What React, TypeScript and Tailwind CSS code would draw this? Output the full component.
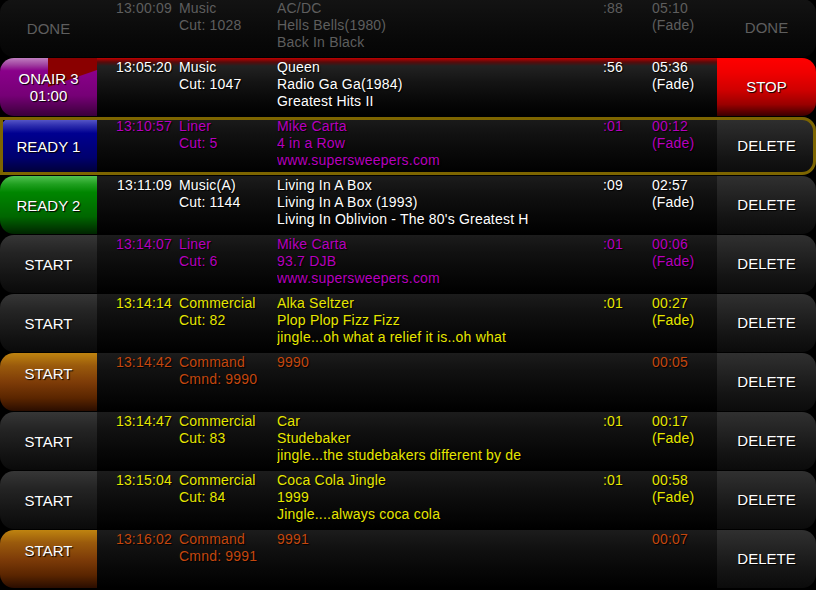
import React from 'react';

type Tone = 'done' | 'music' | 'liner' | 'spot' | 'command';
type Lamp = 'done' | 'onair' | 'ready1' | 'ready2' | 'start' | 'cmd';

interface Event {
  lamp: Lamp;
  label: string[];
  time: string;
  kind: string[];
  info: string[];
  segue: string;
  length: string[];
  tone: Tone;
  action: 'DONE' | 'STOP' | 'DELETE';
  selected?: boolean;
}

const toneText: Record<Tone, string> = {
  done: 'text-[#5e5e5e]',
  music: 'text-white',
  liner: 'text-[#b600bd]',
  spot: 'text-[#e6e600]',
  command: 'text-[#c4470e]',
};

const lampBg: Record<Lamp, string> = {
  done: 'bg-gradient-to-b from-[#131313] to-[#050505]',
  onair: 'bg-[linear-gradient(to_bottom,#c07ec0_0%,#a040a0_12%,#8a008a_22%,#760076_65%,#3a003a_100%)]',
  ready1: 'bg-[linear-gradient(to_bottom,#6a6ad2_0%,#3030b0_14%,#000090_28%,#00006e_70%,#00002e_100%)]',
  ready2: 'bg-[linear-gradient(to_bottom,#52c252_0%,#20a020_14%,#008600_28%,#006600_70%,#002400_100%)]',
  start: 'bg-[linear-gradient(to_bottom,#363636_0%,#242424_30%,#141414_70%,#0a0a0a_100%)]',
  cmd: 'bg-[linear-gradient(to_bottom,#bf8410_0%,#9a5a0c_22%,#7e3c08_50%,#5a2500_78%,#2a0d00_100%)]',
};

const events: Event[] = [
  { lamp: 'done', label: ['DONE'], time: '13:00:09', kind: ['Music', 'Cut: 1028'], info: ['AC/DC', 'Hells Bells(1980)', 'Back In Black'], segue: ':88', length: ['05:10', '(Fade)'], tone: 'done', action: 'DONE' },
  { lamp: 'onair', label: ['ONAIR 3', '01:00'], time: '13:05:20', kind: ['Music', 'Cut: 1047'], info: ['Queen', 'Radio Ga Ga(1984)', 'Greatest Hits II'], segue: ':56', length: ['05:36', '(Fade)'], tone: 'music', action: 'STOP' },
  { lamp: 'ready1', label: ['READY 1'], time: '13:10:57', kind: ['Liner', 'Cut: 5'], info: ['Mike Carta', '4 in a Row', 'www.supersweepers.com'], segue: ':01', length: ['00:12', '(Fade)'], tone: 'liner', action: 'DELETE', selected: true },
  { lamp: 'ready2', label: ['READY 2'], time: '13:11:09', kind: ['Music(A)', 'Cut: 1144'], info: ['Living In A Box', 'Living In A Box (1993)', "Living In Oblivion - The 80's Greatest H"], segue: ':09', length: ['02:57', '(Fade)'], tone: 'music', action: 'DELETE' },
  { lamp: 'start', label: ['START'], time: '13:14:07', kind: ['Liner', 'Cut: 6'], info: ['Mike Carta', '93.7 DJB', 'www.supersweepers.com'], segue: ':01', length: ['00:06', '(Fade)'], tone: 'liner', action: 'DELETE' },
  { lamp: 'start', label: ['START'], time: '13:14:14', kind: ['Commercial', 'Cut: 82'], info: ['Alka Seltzer', 'Plop Plop Fizz Fizz', 'jingle...oh what a relief it is..oh what'], segue: ':01', length: ['00:27', '(Fade)'], tone: 'spot', action: 'DELETE' },
  { lamp: 'cmd', label: ['START', '\u00a0'], time: '13:14:42', kind: ['Command', 'Cmnd: 9990'], info: ['9990'], segue: '', length: ['00:05'], tone: 'command', action: 'DELETE' },
  { lamp: 'start', label: ['START'], time: '13:14:47', kind: ['Commercial', 'Cut: 83'], info: ['Car', 'Studebaker', 'jingle...the studebakers different by de'], segue: ':01', length: ['00:17', '(Fade)'], tone: 'spot', action: 'DELETE' },
  { lamp: 'start', label: ['START'], time: '13:15:04', kind: ['Commercial', 'Cut: 84'], info: ['Coca Cola Jingle', '1999', 'Jingle....always coca cola'], segue: ':01', length: ['00:58', '(Fade)'], tone: 'spot', action: 'DELETE' },
  { lamp: 'cmd', label: ['START', '\u00a0'], time: '13:16:02', kind: ['Command', 'Cmnd: 9991'], info: ['9991'], segue: '', length: ['00:07'], tone: 'command', action: 'DELETE' },
];

const shadow = '[text-shadow:1px_1px_1px_#000]';

const Lines: React.FC<{ lines: string[]; className?: string }> = ({ lines, className }) => (
  <div className={className}>
    {lines.map((l, i) => (
      <div key={i} className="whitespace-nowrap">{l}</div>
    ))}
  </div>
);

const LampButton: React.FC<{ ev: Event }> = ({ ev }) => {
  const dim = ev.lamp === 'done';
  return (
    <div className={`relative flex w-[97px] shrink-0 items-center justify-center overflow-hidden rounded-l-[14px] ${lampBg[ev.lamp]}`}>
      {ev.lamp === 'onair' && (
        // elapsed-time wedge
        <svg className="absolute inset-0" width="97" height="58" viewBox="0 0 97 58">
          <polygon points="48,29 48,0 97,0 97,12" fill="#8a0000" />
        </svg>
      )}
      <div className={`relative text-center text-[15px] leading-[17px] ${dim ? 'text-[#5e5e5e]' : `text-white ${shadow}`}`}>
        {ev.label.map((l, i) => (
          <div key={i}>{l}</div>
        ))}
      </div>
    </div>
  );
};

const ActionButton: React.FC<{ ev: Event }> = ({ ev }) => {
  const bg =
    ev.action === 'STOP'
      ? 'bg-[linear-gradient(to_bottom,#ff0000_0%,#f00000_25%,#d00000_55%,#9a0000_80%,#3a0000_100%)]'
      : ev.action === 'DONE'
        ? 'bg-gradient-to-b from-[#131313] to-[#050505]'
        : 'bg-[linear-gradient(to_bottom,#303030_0%,#222_35%,#141414_70%,#0b0b0b_100%)]';
  const text = ev.action === 'DONE' ? 'text-[#5e5e5e]' : `text-white ${shadow}`;
  return (
    <div className={`flex w-[99px] shrink-0 items-center justify-center rounded-r-[14px] pt-px text-[15px] ${bg} ${text}`}>
      {ev.action}
    </div>
  );
};

const Row: React.FC<{ ev: Event }> = ({ ev }) => {
  const middle =
    ev.lamp === 'onair'
      ? 'bg-[linear-gradient(to_bottom,#c00000_0px,#5a0a0a_4px,#222_8px,#141414_24px,#070707_44px,#000_100%)]'
      : ev.lamp === 'done'
        ? 'bg-gradient-to-b from-[#131313] to-[#050505]'
        : 'bg-[linear-gradient(to_bottom,#1c1c1c_0%,#111_30%,#080808_65%,#000_100%)]';
  return (
    <div className="relative flex h-[58px] shrink-0">
      <LampButton ev={ev} />
      <div className={`flex flex-1 overflow-hidden pt-px text-[14px] leading-[17px] tracking-[0.2px] ${middle} ${toneText[ev.tone]} ${ev.tone === 'done' ? '' : shadow}`}>
        <div className="w-[75px] shrink-0 text-right">{ev.time}</div>
        <Lines lines={ev.kind} className="ml-[7px] w-[98px] shrink-0" />
        <Lines lines={ev.info} className="w-[326px] shrink-0 overflow-hidden" />
        <div className="w-[49px] shrink-0">{ev.segue}</div>
        <Lines lines={ev.length} className="flex-1" />
      </div>
      <ActionButton ev={ev} />
      {ev.selected && (
        <div className="pointer-events-none absolute inset-0 rounded-r-[14px] border-[3px] border-[#7d6500]" />
      )}
    </div>
  );
};

export default function App() {
  return (
    <div className="h-[590px] w-[816px] overflow-hidden bg-black font-['Liberation_Sans',Arial,sans-serif]">
      <div className="-mt-px flex flex-col gap-px">
        {events.map((ev, i) => (
          <Row key={i} ev={ev} />
        ))}
      </div>
    </div>
  );
}
